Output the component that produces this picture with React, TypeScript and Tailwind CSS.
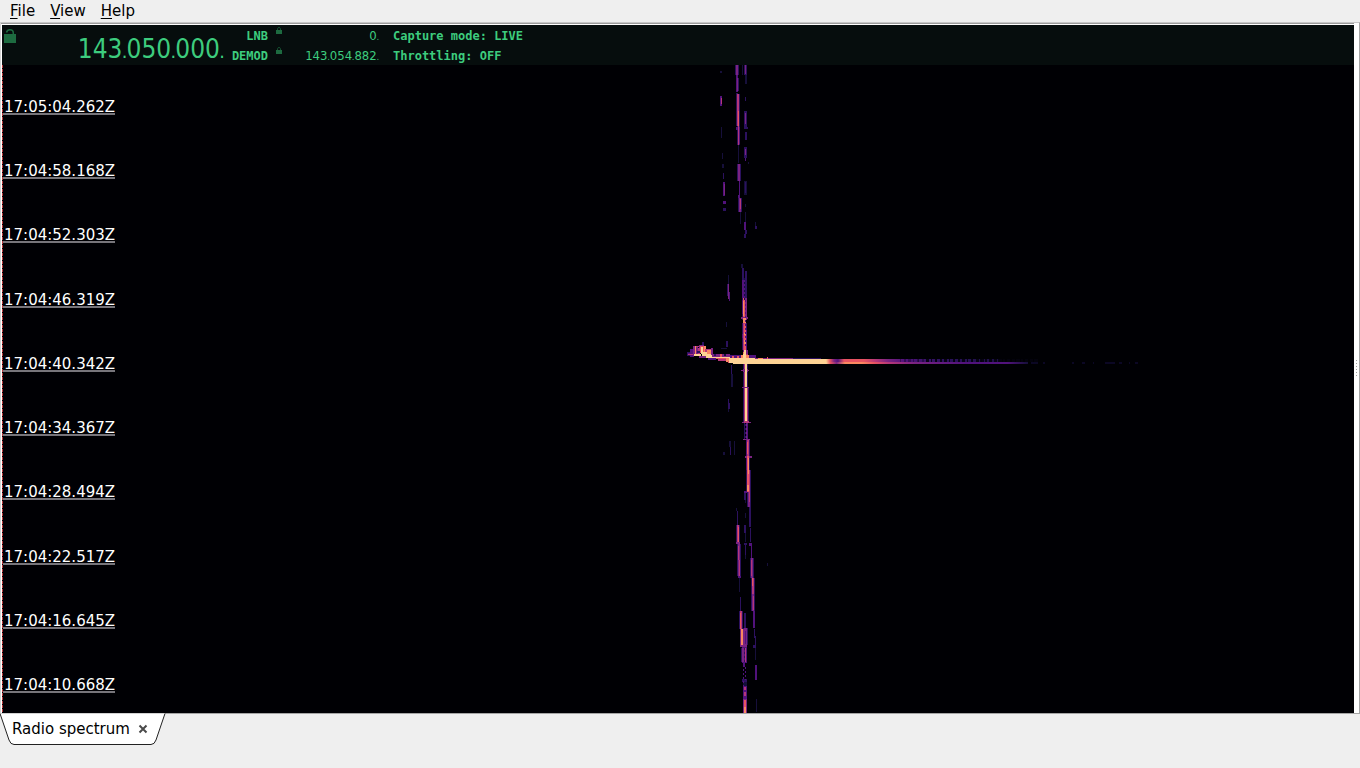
import { useState } from 'react'

// magma palette, from noise floor to saturation
const C = {
  n: '#160f3b',
  d: '#2c115f',
  p: '#51127c',
  v: '#7b2382',
  m: '#b5367a',
  r: '#e85362',
  o: '#fb8861',
  w: '#fed395',
}

type Streak = [x: number, y: number, w: number, h: number, c: keyof typeof C]

const streaks: Streak[] = [
  // left sideband, upper half
  [720, 71, 2, 2, 'n'], [720, 96, 2, 10, 'p'], [721, 98, 1, 6, 'm'], [721, 127, 1, 11, 'n'],
  [722, 153, 1, 6, 'n'], [722, 164, 2, 4, 'n'], [723, 173, 1, 6, 'd'], [723, 182, 2, 14, 'p'],
  [724, 184, 1, 11, 'v'], [723, 201, 3, 3, 'p'], [723, 208, 3, 3, 'd'],
  // drifting carrier, upper half
  [736, 65, 2, 10, 'v'], [736, 75, 2, 17, 'p'], [737, 78, 1, 13, 'v'], [736, 93, 2, 2, 'd'],
  [737, 94, 2, 16, 'm'], [737, 110, 2, 16, 'm'], [738, 111, 1, 15, 'r'], [736, 127, 4, 3, 'p'],
  [738, 126, 1, 19, 'm'], [737, 130, 1, 12, 'd'], [739, 130, 1, 14, 'p'], [738, 145, 1, 18, 'n'],
  [738, 164, 2, 17, 'v'], [739, 181, 1, 15, 'p'], [738, 195, 2, 3, 'p'], [739, 198, 2, 14, 'v'],
  [740, 199, 1, 10, 'm'], [740, 212, 1, 12, 'n'],
  // reference carrier, upper half
  [742, 65, 1, 10, 'n'], [744, 65, 3, 10, 'd'], [745, 65, 1, 9, 'v'], [745, 75, 2, 9, 'n'],
  [745, 97, 1, 4, 'd'], [744, 111, 3, 16, 'd'], [745, 113, 1, 11, 'v'], [744, 127, 4, 2, 'd'],
  [745, 132, 2, 8, 'd'], [744, 147, 3, 11, 'd'], [745, 149, 1, 6, 'v'], [745, 158, 1, 3, 'p'],
  [748, 162, 1, 2, 'n'], [744, 181, 3, 14, 'n'], [745, 182, 1, 11, 'd'], [745, 204, 1, 3, 'n'],
  [745, 212, 1, 10, 'n'], [744, 222, 2, 8, 'p'], [745, 230, 2, 4, 'd'], [744, 234, 2, 4, 'd'],
  [755, 222, 1, 4, 'n'], [755, 226, 2, 3, 'd'],
  // rise before the echo
  [741, 264, 2, 4, 'n'], [742, 268, 2, 12, 'd'], [742, 280, 3, 18, 'p'], [745, 271, 2, 27, 'd'],
  [743, 298, 4, 22, 'v'], [743, 298, 2, 22, 'r'], [743, 301, 1, 15, 'o'], [742, 300, 1, 14, 'p'],
  [741, 317, 7, 2, 'v'], [743, 318, 3, 5, 'o'], [743, 323, 3, 27, 'm'], [744, 324, 2, 26, 'r'],
  [744, 333, 2, 2, 'o'], [744, 340, 2, 4, 'o'], [742, 334, 1, 4, 'p'], [746, 330, 1, 20, 'p'],
  [728, 275, 1, 9, 'n'], [727, 284, 1, 12, 'd'], [728, 284, 1, 15, 'v'], [729, 292, 1, 9, 'p'],
  [726, 322, 1, 5, 'n'], [726, 341, 2, 6, 'd'], [721, 348, 6, 1, 'n'],
  // saturated part of the carrier
  [743, 350, 5, 9, 'v'], [744, 350, 2, 72, 'w'], [743, 352, 1, 6, 'o'], [746, 354, 2, 5, 'm'],
  [744, 364, 1, 58, 'm'], [745, 364, 2, 42, 'w'], [746, 364, 1, 58, 'w'], [747, 388, 1, 34, 'm'],
  [741, 370, 8, 1, 'v'], [743, 369, 5, 3, 'v'], [745, 366, 2, 8, 'w'], [742, 387, 7, 1, 'v'],
  [744, 388, 1, 34, 'm'], [745, 388, 2, 34, 'w'], [742, 422, 9, 1, 'v'], [744, 421, 5, 2, 'm'],
  // faint tracks around the lower carrier
  [731, 365, 1, 9, 'd'], [731, 374, 2, 13, 'n'], [728, 399, 1, 4, 'd'], [728, 403, 2, 6, 'd'],
  [728, 409, 1, 3, 'n'], [723, 452, 2, 3, 'n'], [729, 441, 2, 6, 'n'], [730, 447, 1, 8, 'd'],
  [734, 441, 1, 14, 'n'],
  // lower carrier
  [744, 423, 1, 16, 'd'], [746, 423, 2, 16, 'p'], [743, 439, 7, 1, 'v'], [747, 440, 2, 16, 'm'],
  [747, 442, 1, 12, 'r'], [746, 440, 1, 16, 'p'], [745, 456, 7, 2, 'v'], [747, 456, 2, 18, 'r'],
  [748, 458, 1, 34, 'o'], [747, 474, 2, 18, 'r'], [747, 485, 2, 6, 'o'], [749, 470, 1, 22, 'm'],
  [746, 458, 1, 12, 'p'], [744, 491, 3, 2, 'p'], [744, 493, 2, 7, 'd'], [745, 500, 1, 3, 'n'],
  [748, 492, 2, 15, 'v'], [749, 492, 1, 10, 'm'], [749, 507, 2, 20, 'd'], [750, 518, 1, 7, 'd'],
  [745, 513, 1, 5, 'n'], [744, 525, 2, 8, 'd'], [745, 533, 1, 9, 'n'], [744, 543, 3, 2, 'd'],
  [745, 545, 1, 13, 'd'], [750, 528, 1, 14, 'd'], [749, 543, 3, 3, 'p'], [751, 546, 1, 12, 'p'],
  [751, 558, 2, 20, 'v'], [751, 560, 1, 16, 'm'], [752, 578, 2, 16, 'm'], [752, 578, 1, 8, 'r'],
  [752, 594, 2, 17, 'v'], [753, 596, 1, 14, 'm'], [753, 611, 2, 17, 'p'], [754, 629, 1, 9, 'd'],
  [755, 636, 1, 9, 'd'], [753, 645, 3, 3, 'd'], [755, 648, 1, 12, 'n'], [755, 665, 2, 15, 'p'],
  [756, 699, 1, 13, 'n'], [767, 563, 1, 3, 'n'], [745, 555, 1, 4, 'n'],
  // second drifting carrier
  [736, 508, 1, 3, 'n'], [737, 511, 1, 14, 'd'], [737, 525, 2, 17, 'm'], [738, 527, 1, 15, 'r'],
  [736, 542, 4, 2, 'v'], [738, 544, 2, 16, 'v'], [738, 546, 1, 14, 'm'], [738, 560, 2, 16, 'v'],
  [739, 560, 1, 16, 'm'], [738, 576, 3, 2, 'p'], [739, 578, 1, 14, 'n'], [740, 597, 1, 14, 'd'],
  [740, 611, 2, 18, 'm'], [740, 613, 1, 16, 'r'], [744, 613, 2, 15, 'd'], [740, 629, 4, 17, 'v'],
  [741, 629, 2, 17, 'o'], [744, 628, 3, 17, 'v'], [745, 631, 1, 13, 'p'], [740, 645, 7, 2, 'v'],
  [742, 647, 5, 16, 'p'], [742, 648, 2, 14, 'v'], [745, 648, 1, 14, 'm'], [743, 663, 2, 4, 'p'],
  [742, 679, 5, 3, 'd'], [743, 682, 4, 4, 'n'], [743, 686, 4, 13, 'p'], [744, 687, 2, 3, 'm'],
  [744, 692, 2, 4, 'm'], [743, 699, 4, 14, 'v'], [744, 700, 2, 7, 'r'], [744, 707, 2, 6, 'o'],
  // echo head
  [687, 352, 4, 4, 'd'], [688, 353, 9, 2, 'p'], [690, 349, 4, 8, 'p'], [693, 346, 5, 10, 'v'],
  [695, 346, 1, 9, 'o'], [696, 346, 6, 1, 'm'], [698, 348, 2, 8, 'm'], [699, 345, 5, 3, 'v'],
  [702, 342, 2, 3, 'd'], [700, 346, 6, 7, 'r'], [701, 347, 2, 7, 'w'], [704, 346, 2, 8, 'o'],
  [705, 349, 7, 5, 'm'], [707, 350, 5, 4, 'o'], [711, 348, 2, 7, 'v'], [688, 354, 5, 1, 'm'],
  [694, 354, 7, 2, 'w'], [702, 352, 5, 4, 'w'], [704, 354, 7, 2, 'w'], [697, 351, 3, 2, 'd'],
  [699, 356, 8, 2, 'v'], [706, 355, 7, 3, 'w'], [712, 354, 18, 3, 'v'], [711, 357, 19, 1, 'w'],
  [713, 358, 16, 1, 'r'], [708, 358, 8, 2, 'p'], [718, 359, 10, 2, 'm'], [726, 358, 6, 4, 'o'],
  [714, 354, 2, 2, 'd'], [720, 354, 2, 3, 'r'], [724, 354, 2, 2, 'n'], [728, 361, 2, 2, 'r'],
  // echo body
  [730, 355, 26, 3, 'p'], [732, 356, 2, 2, 'r'], [737, 356, 2, 2, 'r'], [741, 355, 8, 3, 'o'],
  [729, 358, 26, 5, 'w'], [733, 359, 92, 4, 'w'], [733, 362, 92, 2, 'w'], [743, 354, 3, 8, 'w'],
  [755, 358, 38, 1, 'v'], [758, 358, 5, 1, 'o'], [767, 357, 1, 2, 'r'], [793, 358, 28, 1, 'd'],
]

// bright narrow streaks leak into the neighbouring bins
const halos = streaks.filter(([x, y, w, h, c]) => h > 9 && w < 4 && x > 735 && 'vmrow'.includes(c) && (y < 340 || y > 363))

// broken carriers drawn as dots
const dotted = [
  { x: 744, y1: 278, y2: 300, c: C.n },
  { x: 745, y1: 300, y2: 348, c: C.p },
  { x: 745, y1: 424, y2: 438, c: C.d },
  { x: 746, y1: 424, y2: 438, c: C.v },
  { x: 744, y1: 648, y2: 662, c: C.d },
  { x: 743, y1: 665, y2: 699, c: C.p },
  { x: 745, y1: 667, y2: 680, c: C.p },
]

// dim speckle after the end of the tail
const tail = [[1031, 7], [1043, 2], [1072, 2], [1082, 3], [1093, 1], [1105, 10], [1119, 3], [1129, 1], [1135, 3]]

const gaps = Array.from({ length: 46 }, (_, i) => ({ x: 900 + i * 3 + ((i * 7) % 3), w: 1 + ((i * 5) % 2) + (i > 24 ? 1 : 0) }))

const times = [
  '17:05:04.262Z',
  '17:04:58.168Z',
  '17:04:52.303Z',
  '17:04:46.319Z',
  '17:04:40.342Z',
  '17:04:34.367Z',
  '17:04:28.494Z',
  '17:04:22.517Z',
  '17:04:16.645Z',
  '17:04:10.668Z',
]

function Waterfall() {
  return (
    <svg
      className="col-start-1 row-start-1 h-full w-full"
      viewBox="2 65 1352 648"
      preserveAspectRatio="none"
      shapeRendering="crispEdges"
      role="img"
      aria-label="Waterfall"
    >
      <defs>
        <linearGradient id="upper" gradientUnits="userSpaceOnUse" x1="820" y1="0" x2="1020" y2="0">
          <stop offset="0" stopColor={C.w} />
          <stop offset="0.03" stopColor={C.w} />
          <stop offset="0.05" stopColor={C.r} />
          <stop offset="0.07" stopColor={C.v} />
          <stop offset="0.09" stopColor={C.p} />
          <stop offset="0.12" stopColor={C.r} />
          <stop offset="0.22" stopColor={C.r} />
          <stop offset="0.28" stopColor={C.m} />
          <stop offset="0.34" stopColor={C.v} />
          <stop offset="0.42" stopColor={C.p} />
          <stop offset="0.6" stopColor={C.d} />
          <stop offset="1" stopColor={C.n} />
        </linearGradient>
        <linearGradient id="lower" gradientUnits="userSpaceOnUse" x1="820" y1="0" x2="1028" y2="0">
          <stop offset="0" stopColor={C.w} />
          <stop offset="0.03" stopColor={C.w} />
          <stop offset="0.05" stopColor={C.r} />
          <stop offset="0.08" stopColor={C.v} />
          <stop offset="0.12" stopColor={C.o} />
          <stop offset="0.2" stopColor={C.o} />
          <stop offset="0.26" stopColor={C.r} />
          <stop offset="0.33" stopColor={C.m} />
          <stop offset="0.45" stopColor={C.v} />
          <stop offset="0.7" stopColor={C.p} />
          <stop offset="0.9" stopColor={C.p} />
          <stop offset="1" stopColor={C.n} />
        </linearGradient>
      </defs>
      {halos.map(([x, y, w, h], i) => (
        <rect key={i} x={x - 1} y={y} width={w + 2} height={h} fill={C.d} />
      ))}
      {streaks.map(([x, y, w, h, c], i) => (
        <rect key={i} x={x} y={y} width={w} height={h} fill={C[c]} />
      ))}
      {dotted.map((d) => (
        <line key={`${d.x}-${d.y1}`} x1={d.x + 0.5} x2={d.x + 0.5} y1={d.y1} y2={d.y2} stroke={d.c} strokeDasharray="2 2" />
      ))}
      <rect x="820" y="359" width="180" height="3" fill="url(#upper)" />
      {gaps.map((g) => (
        <rect key={g.x} x={g.x} y="359" width={g.w} height="3" fill="#03020d" fillOpacity={g.x > 925 ? 0.9 : 0.35} />
      ))}
      <rect x="820" y="362" width="208" height="2" fill="url(#lower)" />
      {tail.map(([x, w]) => (
        <rect key={x} x={x} y="362" width={w} height="2" fill="#0b0724" />
      ))}
      <line x1="2.5" x2="2.5" y1="65" y2="713" stroke="#b8393c" strokeDasharray="3 1" />
    </svg>
  )
}

function Lock({ open = false, className }: { open?: boolean; className: string }) {
  return open ? (
    <svg className={className} viewBox="0 0 12 14" aria-hidden="true">
      <path d="M2.500 3.500C3 1.600 4.500 .8 6 .8c2.200 0 3.300 1.400 3.300 3.200V6" fill="none" stroke="#1d6b40" strokeWidth="1.500" />
      <rect y="5" width="12" height="9" fill="#1d6b40" />
    </svg>
  ) : (
    <svg className={className} viewBox="0 0 6 7" aria-hidden="true">
      <path d="M1.500 3V1.800C1.500 0 4.500 0 4.500 1.800V3" fill="none" stroke="#164c30" />
      <rect y="3" width="6" height="4" fill="#1d6b40" />
    </svg>
  )
}

// digits in groups, each closed by a small point
function Frequency({ groups, dotClass }: { groups: string[]; dotClass: string }) {
  return (
    <div>
      {groups.map((g, i) => (
        <span key={i}>
          {g}
          <span className={dotClass}>.</span>
        </span>
      ))}
    </div>
  )
}

function App() {
  const [isTabOpen, setIsTabOpen] = useState(true)

  return (
    <div className="flex h-screen flex-col bg-[#efefef] font-['DejaVu_Sans',sans-serif] text-[15px] text-black">
      <nav className="flex h-[22px] shrink-0 items-center gap-[15px] px-[10px] leading-[22px]">
        {['File', 'View', 'Help'].map((item) => (
          <button key={item} type="button">
            <span className="underline underline-offset-2">{item[0]}</span>
            {item.slice(1)}
          </button>
        ))}
      </nav>

      <main className="flex min-h-0 flex-1 border-y border-r border-l border-t-[#c8c8c8] border-r-[#a5a5a5] border-b-[#a5a5a5] border-l-[#d4d4d4] bg-white">
        <div className="flex flex-1 flex-col border-t border-t-[#9b9b9b] pt-px pl-px">
          <header className="flex h-10 shrink-0 bg-[#060d0d] pl-[2px] font-['DejaVu_Sans_Mono',monospace] text-xs leading-5 font-bold text-[#3dcc7e]">
            <button type="button" aria-label="Lock frequency" className="mt-1 h-[14px] w-3">
              <Lock open className="h-[14px] w-3" />
            </button>
            <div className="w-[208px] pt-2 text-right font-['DejaVu_Sans_Condensed','DejaVu_Sans',sans-serif] text-[26px] leading-8 font-normal">
              <Frequency groups={['143', '050', '000']} dotClass="text-xs leading-none font-bold" />
            </div>
            <div className="w-11 pt-px text-right">
              <div>LNB</div>
              <div>DEMOD</div>
            </div>
            <div className="flex w-[14px] flex-col items-end gap-[13px] pt-[2px]">
              <Lock className="h-[7px] w-[6px]" />
              <Lock className="h-[7px] w-[6px]" />
            </div>
            <div className="w-[97px] pt-px text-right font-['DejaVu_Sans_Condensed','DejaVu_Sans',sans-serif] text-[13px] leading-5 font-normal">
              <Frequency groups={['0']} dotClass="text-[8px] leading-none" />
              <Frequency groups={['143', '054', '882']} dotClass="text-[8px] leading-none" />
            </div>
            <div className="pt-px pl-[14px]">
              <div>Capture mode: LIVE</div>
              <div>Throttling: OFF</div>
            </div>
          </header>
          <section className="grid min-h-0 flex-1 grid-cols-1 grid-rows-1 bg-[#000004]">
            <Waterfall />
            <ol className="col-start-1 row-start-1 flex flex-col items-start justify-between pt-9 pb-5 pl-px text-white">
              {times.map((t) => (
                <li key={t} className="border-b-2 border-[#77757b] pl-px leading-3">
                  {t}
                </li>
              ))}
            </ol>
          </section>
        </div>
        <div className="flex w-[5px] flex-col items-center justify-center gap-[2px]">
          {[0, 1, 2, 3, 4, 5].map((i) => (
            <span key={i} className="h-px w-px bg-[#a0a0a0]" />
          ))}
        </div>
      </main>

      <footer className="h-[54px] shrink-0">
        {isTabOpen && (
          <div className="-mt-px grid h-8 w-[166px]">
            <svg className="col-start-1 row-start-1 h-8 w-[166px]" viewBox="0 0 166 32" aria-hidden="true">
              <path d="M0 0.500L9 27Q10.500 31.500 14 31.500H151Q154.500 31.500 156 27L165 0.500" fill="#fff" stroke="#222" />
            </svg>
            <div className="col-start-1 row-start-1 flex items-center gap-2 pl-3">
              <button type="button">Radio spectrum</button>
              <button type="button" aria-label="Close tab" onClick={() => setIsTabOpen(false)}>
                <svg className="h-[10px] w-[10px]" viewBox="0 0 10 10" aria-hidden="true">
                  <path d="M1.500 1.500L8.500 8.500M8.500 1.500L1.500 8.500" stroke="#4a4a4a" strokeWidth="2" />
                </svg>
              </button>
            </div>
          </div>
        )}
      </footer>
    </div>
  )
}

export default App
